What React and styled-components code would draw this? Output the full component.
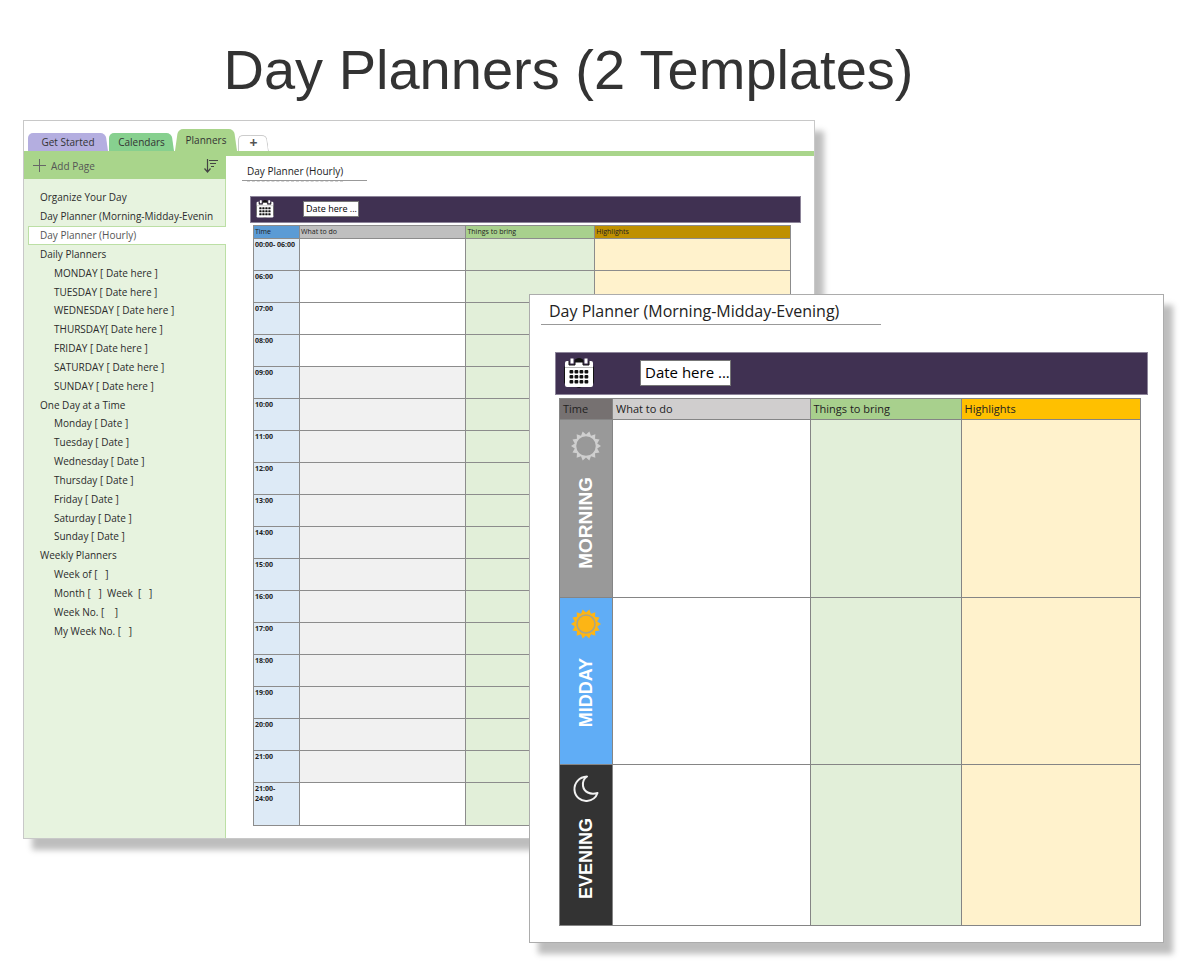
import React from 'react';
import styled, { createGlobalStyle, css } from 'styled-components';

const GlobalStyle = createGlobalStyle`
  * {
    box-sizing: border-box;
  }
  body {
    margin: 0;
    background: #ffffff;
    font-family: 'Open Sans', 'Noto Sans', sans-serif;
    color: #333333;
  }
  button,
  input {
    font-family: inherit;
    margin: 0;
  }
`;

const Page = styled.main`
  padding: 38px 36px 37px 23px;
`;

const Title = styled.h1`
  margin: 0 0 18px;
  padding-right: 50px;
  font-family: 'Liberation Sans', Arial, sans-serif;
  font-size: 56px;
  line-height: 64px;
  font-weight: 400;
  text-align: center;
`;

const Stage = styled.div`
  display: grid;
  grid-template-columns: 506fr 286fr 349fr;
  align-items: start;
`;

const Window = styled.section`
  grid-row: 1;
  background: #ffffff;
  border: 1px solid ${(props) => (props.$front ? '#acacac' : '#c8c8c8')};
  box-shadow: 9px 11px 6px rgba(0, 0, 0, 0.26);
  min-width: 0;
  ${(props) =>
    props.$front
      ? css`
          grid-column: 2 / 4;
          margin-top: 174px;
          padding: 5px 15px 16px 11px;
        `
      : css`
          grid-column: 1 / 3;
        `}
`;

const Tabs = styled.nav`
  display: flex;
  align-items: flex-end;
  height: 30px;
  padding-left: 4px;
`;

const Tab = styled.button`
  position: relative;
  z-index: 0;
  width: ${(props) => props.$width}px;
  height: ${(props) => (props.$active ? 22 : 18)}px;
  margin-right: 1px;
  padding: 0;
  border: 0;
  background: none;
  color: #333333;
  font-size: 10px;
  line-height: 18px;
  &::before,
  &::after {
    content: '';
    position: absolute;
    z-index: -1;
    top: 0;
    bottom: 0;
    background: ${(props) => props.$color};
  }
  &::before {
    left: 0;
    right: 50%;
    border-radius: 5px 0 0 0;
    transform: skewX(${(props) => (props.$active ? -8 : 0)}deg);
    transform-origin: bottom;
  }
  &::after {
    left: 49%;
    right: 0;
    border-radius: 0 5px 0 0;
    transform: skewX(8deg);
    transform-origin: bottom;
  }
`;

const NewTab = styled(Tab)`
  height: 16px;
  color: #555555;
  font-size: 14px;
  line-height: 16px;
  font-weight: 700;
  &::before {
    border: solid #cccccc;
    border-width: 1px 0 0 1px;
  }
  &::after {
    border: solid #cccccc;
    border-width: 1px 1px 0 0;
  }
`;

const Columns = styled.div`
  display: grid;
  grid-template-columns: 202px 1fr;
  border-top: 5px solid #a9d58b;
`;

const Sidebar = styled.aside`
  background: #e7f3df;
  border-right: 1px solid #bcdfa5;
`;

const SidebarHead = styled.div`
  display: flex;
  align-items: center;
  justify-content: space-between;
  height: 23px;
  padding: 0 8px 4px 9px;
  margin-right: -1px;
  background: #a9d58b;
`;

const HeadButton = styled.button`
  display: flex;
  align-items: center;
  gap: 5px;
  padding: 0;
  border: 0;
  background: none;
  color: #555555;
  font-size: 10px;
  line-height: 16px;
`;

const PageList = styled.ul`
  display: grid;
  grid-auto-rows: 1fr;
  min-height: 452px;
  margin: 9px 0 0;
  padding: 0;
  list-style: none;
`;

const PageItem = styled.li`
  display: flex;
  align-items: center;
  padding-left: ${(props) => (props.$nested ? 30 : 16)}px;
  ${(props) =>
    props.$active &&
    css`
      margin: 0 -1px 0 4px;
      padding-left: 11px;
      background: #ffffff;
      border: solid #bcdfa5;
      border-width: 1px 0 1px 1px;
    `}
`;

const PageLink = styled.a`
  color: ${(props) => (props.$active ? '#555555' : '#2b2b2b')};
  font-size: 10px;
  line-height: 16px;
  text-decoration: none;
  white-space: pre;
`;

const Note = styled.div`
  padding: 7px 13px 12px 16px;
`;

const NoteTitle = styled.h2`
  position: relative;
  width: fit-content;
  margin: 0;
  border-bottom: 1px solid #999999;
  color: #222222;
  font-weight: 400;
  &::after {
    content: '';
    position: absolute;
  }
  ${(props) =>
    props.$large
      ? css`
          padding: 0 42px 1px 8px;
          margin-bottom: 27px;
          font-size: 16px;
          line-height: 23px;
          &::after {
            top: 100%;
            left: 50%;
            right: 0;
            border-bottom: 1px solid #999999;
          }
        `
      : css`
          padding: 0 24px 0 5px;
          margin-bottom: 15px;
          font-size: 10px;
          line-height: 17px;
          &::after {
            top: calc(100% + 1px);
            left: 5px;
            right: 24px;
            border-bottom: 1px dashed #d4d4d4;
          }
        `}
`;

const Banner = styled.div`
  display: flex;
  align-items: center;
  background: #403152;
  border: 1px solid #8d859a;
  ${(props) =>
    props.$large
      ? css`
          height: 43px;
          margin: 0 0 3px 14px;
          padding: 0 0 2px 8px;
          gap: 46px;
        `
      : css`
          height: 27px;
          margin: 0 0 2px 8px;
          padding: 0 0 2px 5px;
          gap: 29px;
        `}
`;

const DateInput = styled.input`
  border: 1px solid #777777;
  border-radius: 0;
  background: #ffffff;
  color: #000000;
  ${(props) =>
    props.$large
      ? css`
          width: 91px;
          height: 26px;
          padding: 0 0 2px 4px;
          font-size: 15px;
        `
      : css`
          width: 56px;
          height: 16px;
          padding: 0 0 0 2px;
          font-size: 9px;
        `}
`;

const HourTable = styled.table`
  width: calc(100% - 21px);
  margin-left: 11px;
  border-collapse: collapse;
  table-layout: fixed;
  color: #222222;
  th,
  td {
    padding: 0 0 0 1px;
    border: 1px solid #8c8c8c;
    text-align: left;
    vertical-align: top;
  }
  tbody th {
    padding-top: 1px;
  }
`;

const HourHead = styled.th`
  width: ${(props) => props.$width};
  height: 13px;
  background: ${(props) => props.$color};
  font-size: 7px;
  line-height: 12px;
  font-weight: 400;
`;

const HourLabel = styled.th`
  height: ${(props) => (props.$tall ? 43 : 32)}px;
  background: #ddeaf6;
  font-size: 7px;
  line-height: 10px;
  font-weight: 700;
  white-space: pre-line;
`;

const Cell = styled.td`
  background: ${(props) => props.$color};
`;

const PartTable = styled(HourTable)`
  width: calc(100% - 25px);
  margin-left: 18px;
  th,
  td {
    padding: 0 0 0 3px;
    border: 1px solid #858585;
  }
`;

const PartHead = styled(HourHead)`
  height: 21px;
  font-size: 11px;
  line-height: 20px;
`;

const PartLabel = styled.th`
  height: ${(props) => props.$height}px;
  background: ${(props) => props.$color};
`;

const PartInner = styled.div`
  display: flex;
  flex-direction: column;
  align-items: center;
  gap: ${(props) => props.$gap}px;
  padding: 9px 4px 0 0;
`;

const PartName = styled.span`
  writing-mode: vertical-rl;
  transform: rotate(180deg);
  color: #ffffff;
  font-family: 'Liberation Sans', Arial, sans-serif;
  font-size: ${(props) => props.$size}px;
  line-height: 24px;
  font-weight: 700;
`;

const PAGES = [
  { name: 'Organize Your Day' },
  { name: 'Day Planner (Morning-Midday-Evenin' },
  { name: 'Day Planner (Hourly)', active: true },
  { name: 'Daily Planners' },
  { name: 'MONDAY [ Date here ]', nested: true },
  { name: 'TUESDAY [ Date here ]', nested: true },
  { name: 'WEDNESDAY [ Date here ]', nested: true },
  { name: 'THURSDAY[ Date here ]', nested: true },
  { name: 'FRIDAY [ Date here ]', nested: true },
  { name: 'SATURDAY [ Date here ]', nested: true },
  { name: 'SUNDAY [ Date here ]', nested: true },
  { name: 'One Day at a Time' },
  { name: 'Monday [ Date ]', nested: true },
  { name: 'Tuesday [ Date ]', nested: true },
  { name: 'Wednesday [ Date ]', nested: true },
  { name: 'Thursday [ Date ]', nested: true },
  { name: 'Friday [ Date ]', nested: true },
  { name: 'Saturday [ Date ]', nested: true },
  { name: 'Sunday [ Date ]', nested: true },
  { name: 'Weekly Planners' },
  { name: 'Week of [   ]', nested: true },
  { name: 'Month [   ]  Week  [   ]', nested: true },
  { name: 'Week No. [    ]', nested: true },
  { name: 'My Week No. [   ]', nested: true },
];

const HOURS = [
  '00:00- 06:00',
  '06:00',
  '07:00',
  '08:00',
  '09:00',
  '10:00',
  '11:00',
  '12:00',
  '13:00',
  '14:00',
  '15:00',
  '16:00',
  '17:00',
  '18:00',
  '19:00',
  '20:00',
  '21:00',
  '21:00-\n24:00',
];

const CalendarIcon = ({ size }) => (
  <svg width={size} height={size} viewBox="0 0 30 30" aria-hidden="true">
    <ellipse cx="15" cy="15" rx="8" ry="15" fill="#111111" />
    <rect x="0" y="8" width="30" height="18" rx="2" fill="#111111" />
    <rect x="1" y="3" width="28" height="26" rx="2" fill="#ffffff" />
    <path d="M5 3v4h6V3M19 3v4h6V3" fill="#403152" stroke="#111111" />
    <path d="M11 3h8" stroke="#111111" strokeWidth="3" />
    <path d="M8 0.500v5M22 0.500v5" stroke="#ffffff" strokeWidth="3" />
    <path d="M1 9.500h28" stroke="#bbbbbb" strokeWidth="1" />
    {[12, 17, 22].map((y) =>
      [5, 10, 15, 20].map((x) => (
        <rect key={x + '-' + y} x={x + 0.5} y={y} width="3.8" height="3.5" rx="1" fill="#111111" />
      ))
    )}
  </svg>
);

// 14 teeth, one pointing straight left and one straight right
const sunPoints = Array.from({ length: 28 }, (_, i) => {
  const r = i % 2 ? 11.5 : 15;
  const a = (i * Math.PI) / 14;
  return (16 + r * Math.cos(a)).toFixed(2) + ',' + (16 + r * Math.sin(a)).toFixed(2);
}).join(' ');

const SunIcon = ({ color, center, ring }) => (
  <svg width="32" height="32" viewBox="0 0 32 32" aria-hidden="true">
    <polygon points={sunPoints} fill={color} />
    <circle cx="16" cy="16" r="9" fill={center} stroke={ring} strokeWidth="1.5" />
  </svg>
);

const MoonIcon = () => (
  <svg width="32" height="28" viewBox="0 0 32 28" aria-hidden="true">
    <path
      d="M17 1.500C9 2 4 8 4.500 15C5 22 11 26.500 17 26C22 25.500 26 22.500 27.500 18C20 20 14 17 13 11C12.500 7 14 3.500 17 1.500Z"
      fill="none"
      stroke="#f2f2f2"
      strokeWidth="2"
      strokeLinejoin="round"
    />
  </svg>
);

const PARTS = [
  {
    name: 'MORNING',
    color: '#999999',
    height: 178,
    size: 19,
    gap: 15,
    icon: <SunIcon color="#cfcfcf" center="#999999" ring="#999999" />,
  },
  {
    name: 'MIDDAY',
    color: '#60adf6',
    height: 167,
    size: 18,
    gap: 18,
    icon: <SunIcon color="#fdb515" center="#fdb515" ring="#a9a68a" />,
  },
  {
    name: 'EVENING',
    color: '#333333',
    height: 161,
    size: 18,
    gap: 15,
    icon: <MoonIcon />,
  },
];

const HourlyPlanner = () => (
  <Note>
    <NoteTitle>Day Planner (Hourly)</NoteTitle>
    <Banner>
      <CalendarIcon size={18} />
      <DateInput aria-label="Date" defaultValue="Date here ..." />
    </Banner>
    <HourTable>
      <thead>
        <tr>
          <HourHead $width="46px" $color="#5b9bd5">Time</HourHead>
          <HourHead $width="31%" $color="#bfbfbf">What to do</HourHead>
          <HourHead $width="24%" $color="#a8d08d">Things to bring</HourHead>
          <HourHead $color="#bf9000">Highlights</HourHead>
        </tr>
      </thead>
      <tbody>
        {HOURS.map((hour, i) => (
          <tr key={hour}>
            <HourLabel scope="row" $tall={i === HOURS.length - 1}>
              {hour}
            </HourLabel>
            <Cell $color={i > 3 && i < 17 ? '#f1f1f1' : '#ffffff'} />
            <Cell $color="#e2efd9" />
            <Cell $color="#fff2cc" />
          </tr>
        ))}
      </tbody>
    </HourTable>
  </Note>
);

const PartsPlanner = () => (
  <>
    <NoteTitle $large>Day Planner (Morning-Midday-Evening)</NoteTitle>
    <Banner $large>
      <CalendarIcon size={30} />
      <DateInput $large aria-label="Date" defaultValue="Date here ..." />
    </Banner>
    <PartTable>
      <thead>
        <tr>
          <PartHead $width="53px" $color="#767171">Time</PartHead>
          <PartHead $width="34%" $color="#d0cece">What to do</PartHead>
          <PartHead $width="26%" $color="#a8d08d">Things to bring</PartHead>
          <PartHead $color="#ffc000">Highlights</PartHead>
        </tr>
      </thead>
      <tbody>
        {PARTS.map((part) => (
          <tr key={part.name}>
            <PartLabel scope="row" $height={part.height} $color={part.color}>
              <PartInner $gap={part.gap}>
                {part.icon}
                <PartName $size={part.size}>{part.name}</PartName>
              </PartInner>
            </PartLabel>
            <Cell $color="#ffffff" />
            <Cell $color="#e2efd9" />
            <Cell $color="#fff2cc" />
          </tr>
        ))}
      </tbody>
    </PartTable>
  </>
);

class App extends React.Component {
  render() {
    return (
      <Page>
        <GlobalStyle />
        <Title>Day Planners (2 Templates)</Title>
        <Stage>
          <Window>
            <Tabs>
              <Tab $width={80} $color="#b4aee0">Get Started</Tab>
              <Tab $width={65} $color="#87d08f">Calendars</Tab>
              <Tab $width={62} $color="#a9d58b" $active>Planners</Tab>
              <NewTab $width={31} $color="#ffffff" aria-label="New section">+</NewTab>
            </Tabs>
            <Columns>
              <Sidebar>
                <SidebarHead>
                  <HeadButton>
                    <svg width="13" height="13" viewBox="0 0 13 13" aria-hidden="true">
                      <path d="M6.500 0v13M0 6.500h13" stroke="#666666" />
                    </svg>
                    Add Page
                  </HeadButton>
                  <HeadButton aria-label="Sort pages">
                    <svg width="14" height="14" viewBox="0 0 14 14" aria-hidden="true">
                      <path
                        d="M3.500 0v13M0.500 9.500l3 3.500l3-3.500M5 1.500h9M6 4.500h6M7 7.500h3"
                        fill="none"
                        stroke="#444444"
                        strokeWidth="1.2"
                      />
                    </svg>
                  </HeadButton>
                </SidebarHead>
                <PageList>
                  {PAGES.map((page) => (
                    <PageItem key={page.name} $nested={page.nested} $active={page.active}>
                      <PageLink href="#" $active={page.active}>
                        {page.name}
                      </PageLink>
                    </PageItem>
                  ))}
                </PageList>
              </Sidebar>
              <HourlyPlanner />
            </Columns>
          </Window>
          <Window $front>
            <PartsPlanner />
          </Window>
        </Stage>
      </Page>
    );
  }
}

export default App;
